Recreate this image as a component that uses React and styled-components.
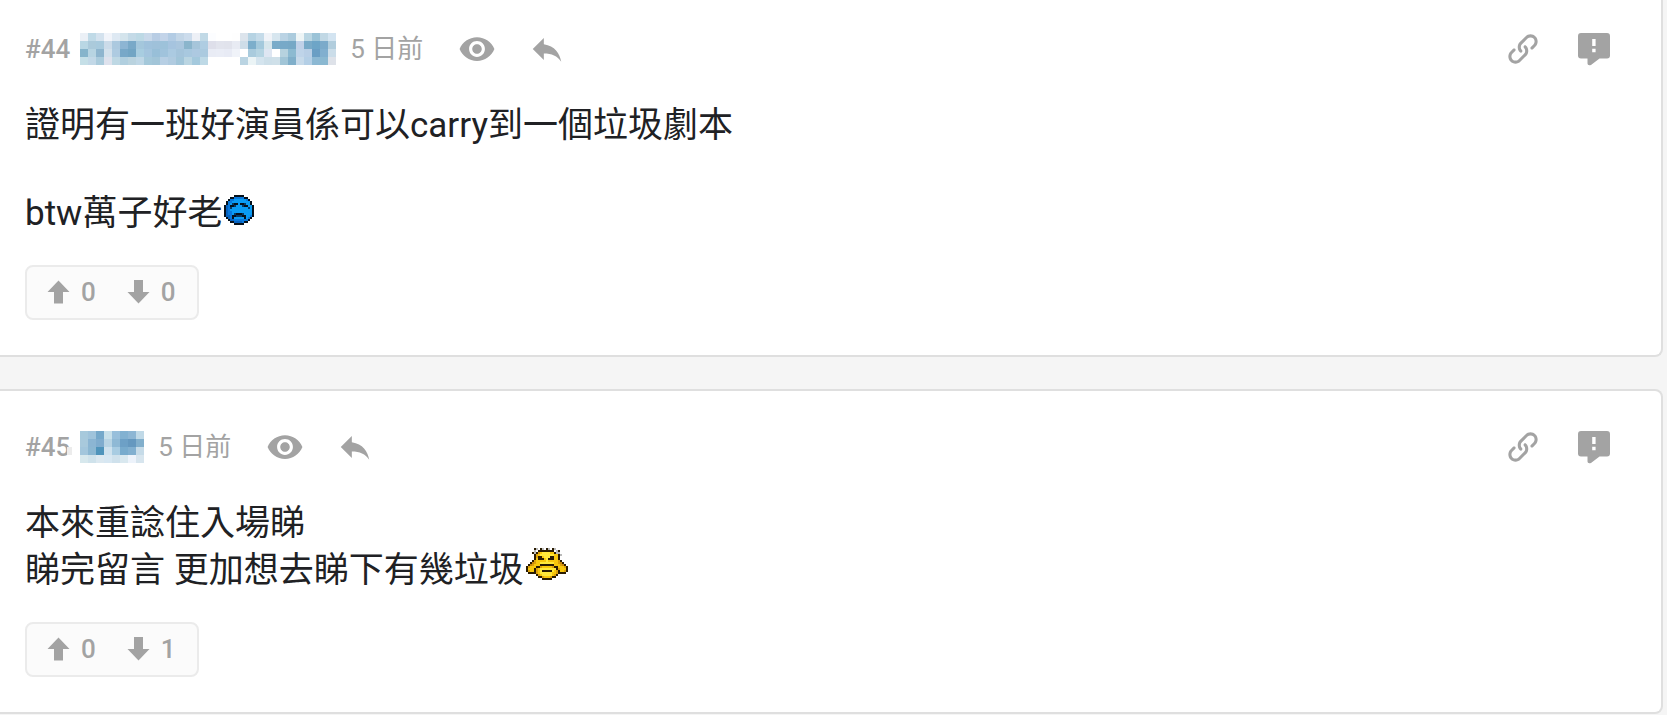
import styled, { createGlobalStyle } from "styled-components";
import { MdReply, MdVisibility } from "react-icons/md";

const GlobalStyle = createGlobalStyle`
  * {
    box-sizing: border-box;
  }

  body {
    margin: 0;
    background: #f5f5f5;
    color: #202124;
    font-family: Roboto, "Noto Sans CJK TC", sans-serif;
  }
`;

const Thread = styled.main`
  display: flex;
  flex-direction: column;
  gap: 32px;
  padding-right: 4px;
`;

const Card = styled.article`
  padding: 37px 51px 35px 25px;
  background: #fff;
  border: 2px solid #dfdfdf;
  border-left: 0;
  border-radius: 0 8px 8px 0;

  &:first-child {
    padding-top: 30px;
    border-top: 0;
    border-top-right-radius: 0;
  }
`;

const Header = styled.header`
  display: flex;
  align-items: center;
  height: 38px;
  color: #a3a3a3;
  font-size: 26px;
  line-height: 38px;
`;

const Number = styled.span`
  margin-right: 10px;
  font-weight: 500;
`;

const Time = styled.time`
  margin: 0 35px 0 14px;
  white-space: nowrap;
`;

const IconButton = styled.button`
  display: flex;
  padding: 0;
  border: 0;
  background: none;
  color: #a3a3a3;
  cursor: pointer;
`;

const Actions = styled.div`
  display: flex;
  align-items: center;
  gap: ${({ $gap }) => $gap}px;
  margin-left: ${({ $end }) => ($end ? "auto" : 0)};
`;

const Body = styled.div`
  margin: 36px 0 29px;
  font-size: 35px;
  line-height: 44px;
  white-space: pre-wrap;
`;

const Mosaic = styled.svg`
  display: block;
  flex-shrink: 0;
  overflow: visible;
  shape-rendering: crispEdges;
`;

const Face = styled.svg`
  display: inline-block;
  margin: 2px 0 0 2px;
  vertical-align: ${({ $raise }) => $raise || 0}px;
  shape-rendering: crispEdges;
`;

const Votes = styled.div`
  display: inline-flex;
  gap: 31px;
  height: 55px;
  padding: 3px 21px 5px 20px;
  background: #fbfbfb;
  border: 2px solid #ebebeb;
  border-radius: 8px;
  vertical-align: top;
`;

const VoteButton = styled.button`
  display: flex;
  align-items: center;
  gap: 11px;
  padding: 0;
  border: 0;
  background: none;
  color: #a3a3a3;
  font-family: inherit;
  font-size: 26px;
  font-weight: 500;
  line-height: 38px;
  cursor: pointer;
`;

const sadColors = { k: "#06121c", b: "#0878dc", c: "#0a9cf4", d: "#0562c0", m: "#063a66" };

const sadFace = [
  ".....kkkkk.....",
  "...kkbbbbbkk...",
  "..kbbccccccbk..",
  ".kbbccccccccck.",
  ".kbcmkkckkmcck.",
  "kdbkkmcccmkkcck",
  "kdbmccccccccmck",
  "kdbccccccccccck",
  "kdbbcccccccccck",
  "kdbbcmkkkmcccck",
  "kddbkkmmmkkccbk",
  ".kdbkccccckcbk.",
  "..kddbbbbbbbk..",
  "...kkddddbkk...",
  ".....kkkkk.....",
];

const clapColors = {
  k: "#2a1c02",
  g: "#b9b9b9",
  o: "#c88508",
  y: "#f8c80c",
  l: "#ffe93a",
  d: "#dca00a",
};

const clapFace = [
  "....kg.kg.kg.kg......",
  "....g.kkkkkkkk.gk....",
  "...kgkdyllllyykgg....",
  "....kdylllllllyykg...",
  "....kdkkylllkkyyk....",
  "....kykkkylkkkyyk....",
  "...kdyyyyylyyyyydk...",
  "..kodyylllllllyydok..",
  ".kodyyykkkkkkkyyydok.",
  "kdyyykkdyyyyydkkyyydk",
  "kyyykdyllllllllkdyyyk",
  "kdyykdylkkkkklydkyydk",
  ".kkkkdyllllllyydkkkk.",
  ".....kdylllllydk.....",
  "......kkdyyydkk......",
  "........kkkkk........",
];

const nameLong = [
  "#ebf0f6 #c0dae7 #d4e2ee #f1f4fa #dee9f3 #d4e4ec #c4dae7 #bdd9e5 #c9d9ea #b8cde4 #c3d4e9 #b3cce4 #c3d6e7 #ccdcec #edf0f6 #c1d9e6 #fcfdff #ffffff #ffffff #fefefe #dce4ec #b6d3e3 #c5dbe9 #f0f3f8 #d7e6ef #bad3e4 #abcbdd #eef5f6 #bad6e3 #9bc3d7 #c1d8e5 #d3e4f1",
  "#b9d7e4 #abcadb #a8cadd #cbdbe9 #acc9df #8db5d3 #79a9c8 #a4c7dc #a0c2dc #9fc1da #9dc2da #a6c4df #aac6de #8bb5cc #a6c5da #afcde2 #dedfea #e2e4ed #e1e3ec #e8ebf3 #cedde8 #7caecb #a4c9dc #d7e6ec #79abc9 #77a9c8 #76a8c6 #c0d1e8 #78aac8 #6da5c7 #7baaca #b1cddd",
  "#86b4cb #b7d4e2 #8eb5ce #d3e1ec #aecbe1 #78a8c8 #72a5c4 #a8cde0 #a4c5de #98bfd8 #a0c3dc #abcae1 #a4c4db #a8c8df #adc9e1 #abcadf #e9ecf5 #eaedf6 #e8ebf5 #f0f3f9 #ffffff #a9cbdd #b5d4e2 #dee6f2 #ffffff #b6d2df #8cbad1 #bfd4e9 #b9cfe6 #6a9ec4 #81afcf #cbdde9",
  "#c5dfe7 #c2d8e7 #aacbdc #dee2ed #bed8e4 #b1cfdf #bad3df #bfd7e6 #a4c8da #a2c5d8 #b7cfe4 #b0cbe0 #a1c5d9 #bad5e2 #a4c9dd #bed9e6 #ffffff #ffffff #ffffff #ffffff #bad4e2 #ebf4f6 #d4e4ee #cddfe9 #cfe0e9 #a1c5d7 #80afca #c7daea #b4cfe6 #8cb8d3 #8ab8d1 #dee2e9",
].map((row) => row.split(" "));

const nameShort = [
  "#a7c9dc #9fc3db #75a8ca #c8e0ea #98bfdb #82b1d1 #8db6d4 #c0d9e7",
  "#a8c9dc #8bb5d3 #7facce #b8d4e4 #8fb9d5 #6da0c6 #6598bf #82afcc",
  "#a3c6dc #8bb7d2 #4f94bb #cfe2ee #a8cce2 #78abcd #82b0d0 #c6dbe8",
  "#d7e8ed #cfe2eb #dbe8f0 #d7e7f2 #cfe1ec #d9e8ef #edf3fb #d7e5ee",
].map((row) => row.split(" "));

function PixelFace({ rows, colors, label, raise }) {
  return (
    <Face
      role="img"
      aria-label={label}
      width={rows[0].length * 2}
      height={rows.length * 2}
      viewBox={`0 0 ${rows[0].length} ${rows.length}`}
      $raise={raise}
    >
      {rows.map((row, y) =>
        [...row].map(
          (c, x) =>
            colors[c] && (
              <rect key={`${x}-${y}`} x={x} y={y} width="1" height="1" fill={colors[c]} />
            )
        )
      )}
    </Face>
  );
}

function HiddenName({ rows, spill }) {
  return (
    <Mosaic width={rows[0].length * 8} height={rows.length * 8} aria-hidden="true">
      {spill && <rect x="-13" y="16" width="5" height="8" fill="#ececec" />}
      {rows.map((row, y) =>
        row.map((fill, x) => (
          <rect key={`${x}-${y}`} x={x * 8} y={y * 8} width="8" height="8" fill={fill} />
        ))
      )}
    </Mosaic>
  );
}

function LinkIcon() {
  return (
    <svg width="30" height="30" viewBox="0 0 32 32" fill="currentColor">
      <path d="M13.757 19.868c-.416 0-.832-.159-1.149-.476-2.973-2.973-2.973-7.81 0-10.783l6-6c1.44-1.44 3.355-2.233 5.392-2.233s3.951.793 5.392 2.233c2.973 2.973 2.973 7.81 0 10.783l-2.743 2.743c-.635.635-1.663.635-2.298 0s-.635-1.663 0-2.298l2.743-2.743c1.706-1.706 1.706-4.481 0-6.187-.826-.826-1.925-1.281-3.094-1.281s-2.267.455-3.094 1.281l-6 6c-1.706 1.706-1.706 4.481 0 6.187.635.635.635 1.663 0 2.298-.317.317-.733.476-1.149.476z" />
      <path d="M8 31.625c-2.037 0-3.952-.793-5.392-2.233-2.973-2.973-2.973-7.81 0-10.783l2.743-2.743c.635-.635 1.664-.635 2.298 0s.635 1.663 0 2.298l-2.743 2.743c-1.706 1.706-1.706 4.481 0 6.187.826.826 1.925 1.281 3.094 1.281s2.267-.455 3.094-1.281l6-6c1.706-1.706 1.706-4.481 0-6.187-.635-.635-.635-1.663 0-2.298s1.663-.635 2.298 0c2.973 2.973 2.973 7.81 0 10.783l-6 6c-1.44 1.44-3.355 2.233-5.392 2.233z" />
    </svg>
  );
}

function ReportIcon() {
  return (
    <svg width="32" height="34" viewBox="0 0 32 34" fill="currentColor">
      <path
        fillRule="evenodd"
        d="M3 1H29a3 3 0 0 1 3 3V23.500a3 3 0 0 1-3 3H21.500L13 33Q9.500 34 9.500 31.500V26.500H3a3 3 0 0 1-3-3V4a3 3 0 0 1 3-3ZM14.200 7V14H17.600V7ZM14.200 16.800V20.200H17.600V16.800Z"
      />
    </svg>
  );
}

function VoteArrow({ down }) {
  return (
    <svg width="23" height="24" viewBox="0 0 23 24" fill="currentColor">
      <path
        d={
          down
            ? "M7 0H16V12H22.500L11.500 23.500L0.500 12H7Z"
            : "M11.500 0.500L22.500 12H16V23.500H7V12H0.500Z"
        }
      />
    </svg>
  );
}

function Post({ number, name, spill, up, down, children }) {
  return (
    <Card>
      <Header>
        <Number>#{number}</Number>
        <HiddenName rows={name} spill={spill} />
        <Time>5 日前</Time>
        <Actions $gap={32}>
          <IconButton type="button" aria-label="只看此用戶">
            <MdVisibility size={38} />
          </IconButton>
          <IconButton type="button" aria-label="回覆">
            <MdReply size={38} />
          </IconButton>
        </Actions>
        <Actions $gap={40} $end>
          <IconButton type="button" aria-label="連結">
            <LinkIcon />
          </IconButton>
          <IconButton type="button" aria-label="舉報">
            <ReportIcon />
          </IconButton>
        </Actions>
      </Header>
      <Body>{children}</Body>
      <Votes>
        <VoteButton type="button" aria-label={`正評 ${up}`}>
          <VoteArrow />
          {up}
        </VoteButton>
        <VoteButton type="button" aria-label={`負評 ${down}`}>
          <VoteArrow down />
          {down}
        </VoteButton>
      </Votes>
    </Card>
  );
}

function App() {
  return (
    <>
      <GlobalStyle />
      <Thread>
        <Post number={44} name={nameLong} up={0} down={0}>
          {"證明有一班好演員係可以carry到一個垃圾劇本\n\nbtw萬子好老"}
          <PixelFace rows={sadFace} colors={sadColors} label="sad" />
        </Post>
        <Post number={45} name={nameShort} spill up={0} down={1}>
          {"本來重諗住入場睇\n睇完留言 更加想去睇下有幾垃圾"}
          <PixelFace rows={clapFace} colors={clapColors} label="clap" raise={2} />
        </Post>
      </Thread>
    </>
  );
}

export default App;
